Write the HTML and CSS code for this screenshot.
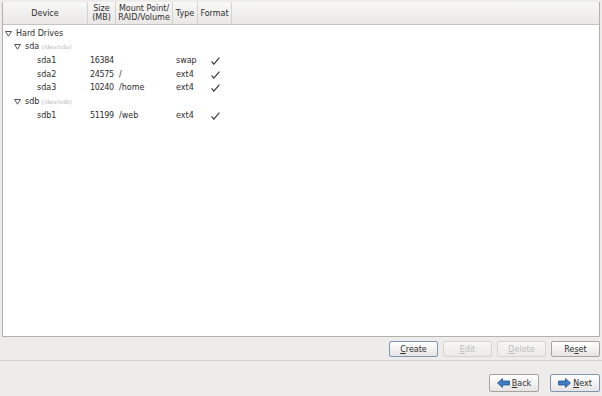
FILE: index.html
```html
<!DOCTYPE html>
<html>
<head>
<meta charset="utf-8">
<link rel="stylesheet" href="styles.css">
</head>
<body>
<div class="page">
  <div class="tree">
    <div class="head">
      <div class="hc">Device</div>
      <div class="hc">Size<br>(MB)</div>
      <div class="hc">Mount Point/<br>RAID/Volume</div>
      <div class="hc">Type</div>
      <div class="hc">Format</div>
      <div class="hc filler"></div>
    </div>
    <div class="rows">
      <div class="row">
        <div class="dev lvl0"><svg class="exp" width="7" height="6" viewBox="0 0 7 6"><path d="M0.5 0.5 H6.5 L3.5 5.2 Z" fill="#fff" stroke="#555" stroke-width="1"/></svg>Hard Drives</div>
      </div>
      <div class="row">
        <div class="dev lvl1"><svg class="exp" width="7" height="6" viewBox="0 0 7 6"><path d="M0.5 0.5 H6.5 L3.5 5.2 Z" fill="#fff" stroke="#555" stroke-width="1"/></svg>sda <span class="sub">(/dev/sda)</span></div>
      </div>
      <div class="row">
        <div class="dev lvl2">sda1</div><div class="c num">16384</div><div class="c m"></div><div class="c">swap</div><div class="chk"><svg width="9" height="8" viewBox="0 0 9 8"><path d="M0.6 4.4 L2.8 7.2 L8.4 0.6" fill="none" stroke="#333" stroke-width="1.1"/></svg></div>
      </div>
      <div class="row">
        <div class="dev lvl2">sda2</div><div class="c num">24575</div><div class="c m">/</div><div class="c">ext4</div><div class="chk"><svg width="9" height="8" viewBox="0 0 9 8"><path d="M0.6 4.4 L2.8 7.2 L8.4 0.6" fill="none" stroke="#333" stroke-width="1.1"/></svg></div>
      </div>
      <div class="row">
        <div class="dev lvl2">sda3</div><div class="c num">10240</div><div class="c m">/home</div><div class="c">ext4</div><div class="chk"><svg width="9" height="8" viewBox="0 0 9 8"><path d="M0.6 4.4 L2.8 7.2 L8.4 0.6" fill="none" stroke="#333" stroke-width="1.1"/></svg></div>
      </div>
      <div class="row">
        <div class="dev lvl1"><svg class="exp" width="7" height="6" viewBox="0 0 7 6"><path d="M0.5 0.5 H6.5 L3.5 5.2 Z" fill="#fff" stroke="#555" stroke-width="1"/></svg>sdb <span class="sub">(/dev/sdb)</span></div>
      </div>
      <div class="row">
        <div class="dev lvl2">sdb1</div><div class="c num">51199</div><div class="c m">/web</div><div class="c">ext4</div><div class="chk"><svg width="9" height="8" viewBox="0 0 9 8"><path d="M0.6 4.4 L2.8 7.2 L8.4 0.6" fill="none" stroke="#333" stroke-width="1.1"/></svg></div>
      </div>
    </div>
  </div>
  <div class="actions">
    <button class="btn default"><u>C</u>reate</button>
    <button class="btn" disabled><u>E</u>dit</button>
    <button class="btn" disabled><u>D</u>elete</button>
    <button class="btn">Re<u>s</u>et</button>
  </div>
  <div class="sep"></div>
  <div class="nav">
    <button class="btn nb"><svg width="13" height="10" viewBox="0 0 13 10"><path d="M0.5 5 L5.5 0.5 V3 H12.5 V7 H5.5 V9.5 Z" fill="#3d7fc2" stroke="#23528a" stroke-width="0.8"/></svg><span><u>B</u>ack</span></button>
    <button class="btn nb default"><svg width="13" height="10" viewBox="0 0 13 10"><path d="M12.5 5 L7.5 0.5 V3 H0.5 V7 H7.5 V9.5 Z" fill="#3d7fc2" stroke="#23528a" stroke-width="0.8"/></svg><span><u>N</u>ext</span></button>
  </div>
</div>
</body>
</html>
```
FILE: styles.css
```css
* { box-sizing: border-box; }
html, body { margin: 0; padding: 0; }
body {
  width: 602px;
  height: 396px;
  background: #edeceb;
  font-family: "DejaVu Sans", sans-serif;
  font-size: 8px;
  color: #2e2e2e;
  overflow: hidden;
}
.page {
  padding: 2px 2px 0 2px;
}
.tree {
  height: 335px;
  background: #fff;
  border: 1px solid #b4b1ac;
  border-top: none;
  display: flex;
  flex-direction: column;
}
.head, .row {
  display: grid;
  grid-template-columns: 85px 28px 57px 25px 34px 1fr;
}
.head {
  height: 23px;
  background: linear-gradient(#f7f7f6, #e9e8e6);
  border-bottom: 1px solid #c8c5c1;
}
.hc {
  display: flex;
  align-items: center;
  justify-content: center;
  text-align: center;
  line-height: 9px;
  border-right: 1px solid #d5d3cf;
  color: #2e2e2e;
  white-space: nowrap;
}
.hc.filler { border-right: none; }
.rows { padding-top: 2px; }
.row {
  height: 13.67px;
  align-items: center;
  line-height: 10px;
  white-space: nowrap;
}
.dev { display: flex; align-items: center; }
.lvl0 { padding-left: 2px; }
.lvl1 { padding-left: 11px; }
.lvl2 { padding-left: 34px; }
.exp { margin-right: 4px; }
.sub { font-size: 6px; color: #b9b9b9; margin-left: 2px; }
.row .dev:only-child { grid-column: 1 / -1; }
.c { padding-left: 3px; }
.c.num { padding-left: 2px; letter-spacing: -0.35px; }
.c.m { padding-left: 3px; }
.chk { display: flex; justify-content: center; padding-left: 1px; }
.actions {
  display: flex;
  justify-content: flex-end;
  gap: 5px;
  padding: 4px 0 0 0;
  height: 23px;
}
.btn {
  width: 49px;
  height: 16px;
  padding: 0;
  font-family: "DejaVu Sans", sans-serif;
  font-size: 8px;
  color: #2e2e2e;
  background: linear-gradient(#ffffff, #e6e5e3);
  border: 1px solid #a7a49f;
  border-radius: 2px;
}
.btn.default { border-color: #7e96b3; }
.btn:disabled {
  color: #bdbcb9;
  border-color: #d6d4d0;
  background: linear-gradient(#f6f6f5, #ebeae8);
}
.sep {
  height: 1px;
  background: #d3d1cd;
  margin: 0 -2px;
}
.nav {
  display: flex;
  justify-content: flex-end;
  gap: 11px;
  padding-top: 13px;
  padding-right: 0;
}
.nb {
  width: 50px;
  height: 18px;
  display: flex;
  align-items: center;
  justify-content: center;
  gap: 2px;
}
```
